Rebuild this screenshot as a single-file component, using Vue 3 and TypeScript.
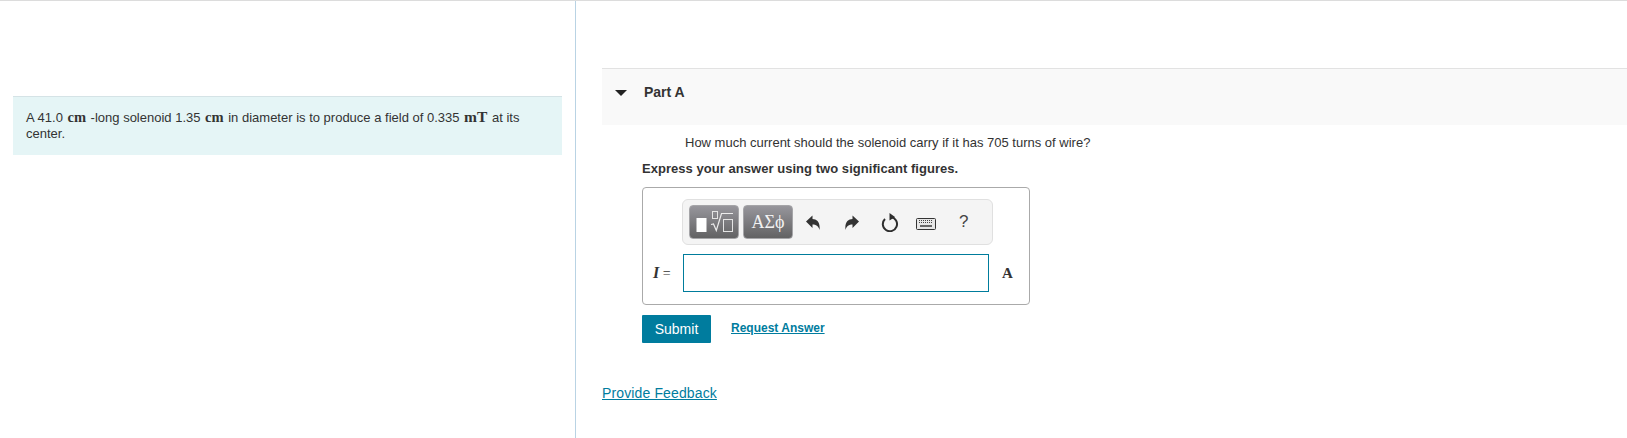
<script setup lang="ts">
const keyRows = [
  { y: 2, xs: [3, 5, 7, 9, 11, 13, 15] },
  { y: 4, xs: [3, 5, 7, 9, 11, 13, 15] },
]
</script>

<template>
  <div class="page">
    <aside class="intro">
      <div class="intro-box">
        A 41.0 <span class="unit">cm</span> -long solenoid 1.35 <span class="unit">cm</span> in diameter is to produce a field of 0.335 <span class="unit unit-big">mT</span> at its center.
      </div>
    </aside>

    <main class="content">
      <div class="part-head">
        <svg class="caret" width="12" height="6" viewBox="0 0 12 6"><path d="M0 0h12L6 6z" fill="#222" /></svg>
        <span class="part-title">Part A</span>
      </div>

      <div class="part-body">
        <p class="question">How much current should the solenoid carry if it has 705 turns of wire?</p>
        <p class="instruction">Express your answer using two significant figures.</p>

        <div class="answer-box">
          <div class="toolbar">
            <button class="tool-btn" type="button" aria-label="Templates">
              <svg width="48" height="32" viewBox="0 0 48 32">
                <rect x="6.5" y="12" width="10" height="14" fill="#fff" />
                <rect x="22.5" y="5.5" width="5" height="7" fill="none" stroke="#e4e4e4" />
                <path d="M21 18.5l2.5-.5 2.8 6.5L31.500 7.500H43" fill="none" stroke="#ececec" stroke-width="1.2" />
                <rect x="33.500" y="13.500" width="9" height="12" fill="none" stroke="#e4e4e4" />
              </svg>
            </button>
            <button class="tool-btn tool-greek" type="button">ΑΣϕ</button>
            <svg class="icon undo" width="14" height="15" viewBox="0 0 14 15"><path d="M0 6.500L6.500 .5V4C11 4 14.500 7.500 13.500 15 12.500 11 10 9.500 6.500 9.500V13z" fill="#333" /></svg>
            <svg class="icon redo" width="14" height="15" viewBox="0 0 14 15"><path d="M14 6.500L7.500 .5V4C3 4-.5 7.500 .5 15 1.500 11 4 9.500 7.500 9.500V13z" fill="#333" /></svg>
            <svg class="icon reset" width="18" height="19" viewBox="0 0 18 19"><path d="M10 4.100A7.100 7.100 0 1 1 4 6" fill="none" stroke="#2e2e2e" stroke-width="2" /><path d="M8.500 0l5.500 4-5.500 3.500z" fill="#2e2e2e" /></svg>
            <svg class="icon keyboard" width="20" height="12" viewBox="0 0 20 12">
              <rect x="0.5" y="0.5" width="19" height="11" rx="1" fill="#e6e6e6" stroke="#333" />
              <template v-for="row in keyRows" :key="row.y">
                <rect v-for="x in row.xs" :key="x" :x="x" :y="row.y" width="1" height="1" fill="#444" />
              </template>
              <rect x="4" y="7" width="12" height="2" fill="#666" />
            </svg>
            <span class="help">?</span>
          </div>

          <div class="answer-row">
            <label class="var" for="answer"><i>I</i> <span>=</span></label>
            <input id="answer" class="answer-input" type="text" />
            <span class="answer-unit">A</span>
          </div>
        </div>

        <div class="actions">
          <button class="submit" type="button">Submit</button>
          <a class="request" href="#">Request Answer</a>
        </div>
      </div>

      <a class="feedback" href="#">Provide Feedback</a>
    </main>
  </div>
</template>

<style>
html,
body {
  margin: 0;
  background: #fff;
}
</style>

<style scoped>
.page {
  display: flex;
  height: 437px;
  border-top: 1px solid #dcdcdc;
  font-family: "Liberation Sans", Arial, sans-serif;
  color: #333;
  overflow: hidden;
}

.intro {
  flex: 0 0 576px;
  box-sizing: border-box;
  padding: 95px 13px 0 13px;
  border-right: 1px solid #b9d3e4;
}

.intro-box {
  box-sizing: border-box;
  height: 59px;
  padding: 12px 40px 0 13px;
  background: #e5f5f6;
  border-top: 1px solid #d5e3e6;
  font-size: 13px;
  line-height: 16px;
}

.unit {
  margin: 0 1px;
  font-family: "Liberation Serif", serif;
  font-weight: bold;
  font-size: 14.5px;
}

.unit-big {
  font-size: 15.5px;
}

.content {
  flex: 1;
  min-width: 0;
  padding-top: 67px;
  padding-left: 26px;
}

.part-head {
  box-sizing: border-box;
  display: flex;
  align-items: flex-start;
  height: 57px;
  padding: 15px 0 0 13px;
  background: #f9f9f9;
  border-top: 1px solid #e2e2e2;
}

.caret {
  margin-top: 6px;
}

.part-title {
  margin-left: 17px;
  font-size: 14px;
  font-weight: bold;
  line-height: 16px;
}

.part-body {
  padding-left: 40px;
}

.question {
  margin: 10px 0 0 43px;
  font-size: 13px;
  line-height: 16px;
}

.instruction {
  margin: 10px 0 0;
  font-size: 13px;
  font-weight: bold;
  line-height: 16px;
  letter-spacing: 0.04px;
}

.answer-box {
  box-sizing: border-box;
  width: 388px;
  height: 118px;
  margin-top: 10px;
  padding: 11px 0 0 39px;
  border: 1px solid #aaa;
  border-radius: 4px;
}

.toolbar {
  box-sizing: border-box;
  display: flex;
  align-items: center;
  width: 311px;
  height: 46px;
  padding-left: 6px;
  background: #f4f4f4;
  border: 1px solid #e0e0e0;
  border-radius: 6px;
}

.tool-btn {
  box-sizing: border-box;
  display: flex;
  align-items: center;
  justify-content: center;
  width: 50px;
  height: 34px;
  margin-right: 4px;
  padding: 0;
  border: 1px solid #a5a5a8;
  border-radius: 4px;
  background: linear-gradient(#97969c, #626263);
}

.tool-greek {
  color: #f2f2f2;
  font-family: "Liberation Serif", serif;
  font-size: 18px;
}

.icon {
  flex: none;
}

.undo {
  margin-left: 9px;
}

.redo {
  margin-left: 25px;
}

.reset {
  margin-left: 22px;
}

.keyboard {
  margin: 4px 0 0 17px;
}

.help {
  margin-left: 23px;
  font-size: 17px;
  color: #444;
}

.answer-row {
  display: flex;
  align-items: center;
  margin-top: 9px;
  margin-left: -29px;
}

.var {
  width: 30px;
  margin-left: -1px;
  padding-left: 1px;
  font-family: "Liberation Serif", serif;
  font-size: 14px;
  white-space: nowrap;
}

.var i {
  font-weight: bold;
  font-size: 16px;
}

.answer-input {
  box-sizing: border-box;
  width: 306px;
  height: 38px;
  border: 1px solid #007c9c;
  outline: none;
}

.answer-unit {
  margin-left: 13px;
  font-family: "Liberation Serif", serif;
  font-size: 15px;
  font-weight: bold;
}

.actions {
  display: flex;
  align-items: flex-start;
  margin-top: 10px;
}

.submit {
  width: 69px;
  height: 28px;
  padding: 0;
  border: none;
  border-radius: 1px;
  background: #007c9e;
  color: #fff;
  font-family: inherit;
  font-size: 14px;
}

.request {
  margin: 5px 0 0 20px;
  font-size: 12px;
  font-weight: bold;
  line-height: 16px;
  color: #007c9e;
}

.feedback {
  display: inline-block;
  margin-top: 41px;
  font-size: 14px;
  line-height: 18px;
  letter-spacing: 0.13px;
  color: #007c9e;
}
</style>
